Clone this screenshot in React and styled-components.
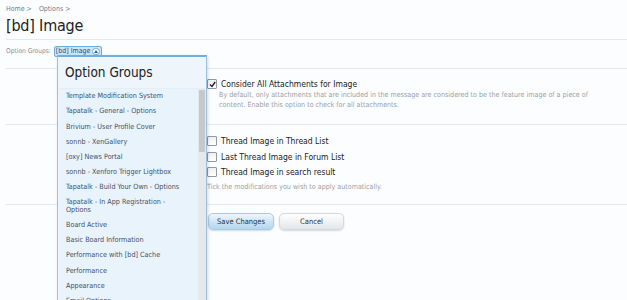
import React from "react";
import styled, { createGlobalStyle } from "styled-components";

const Global = createGlobalStyle`
  html, body { margin: 0; padding: 0; background: #fcfdfe; }
  body { font-family: "DejaVu Sans Condensed", "Liberation Sans", sans-serif; }
`;

const Page = styled.div`
  position: relative;
  width: 627px;
  height: 300px;
  overflow: hidden;
  padding: 0 0 0 6px;
  box-sizing: border-box;
  font-family: "DejaVu Sans Condensed", "Liberation Sans", Arial, sans-serif;
`;

const Crumbs = styled.div`
  display: flex;
  gap: 7px;
  padding-top: 4px;
  height: 10px;
  font-size: 7px;
  line-height: 10px;
  color: #6d7f95;
`;

const Title = styled.h1`
  margin: 0;
  font-weight: normal;
  font-size: 16px;
  line-height: 24px;
  height: 25px;
  color: #222;
  letter-spacing: -0.2px;
`;

const Rule = styled.div`
  height: 1px;
  background: #dcebf5;
`;

const GroupsBar = styled.div`
  display: flex;
  align-items: center;
  height: 28px;
  font-size: 6.6px;
  color: #8a8f96;
  gap: 3px;
`;

const GroupLabel = styled.span`
  margin-top: -6px;
`;

const GroupChip = styled.span`
  display: inline-flex;
  align-items: center;
  gap: 2px;
  height: 9px;
  padding: 0 1px;
  border: 1px solid #6aaede;
  border-radius: 2px;
  background: #cfe5f6;
  color: #1e4f7a;
  font-size: 7px;
  margin-top: -6px;
`;

const ChipArrow = styled.span`
  display: inline-flex;
  align-items: center;
  justify-content: center;
  width: 8px;
  height: 7px;
  border-radius: 4px;
  background: #ffffff;
  border: 1px solid #6aaede;
  box-sizing: border-box;
`;

const Form = styled.div`
  display: grid;
  grid-template-columns: 201px 1fr;
`;

const Section = styled.div`
  grid-column: 2;
  padding: ${(p) => p.$pad};
`;

const FullRule = styled(Rule)`
  grid-column: 1 / span 2;
`;

const CheckRow = styled.label`
  display: flex;
  align-items: center;
  gap: 4px;
  height: ${(p) => p.$h || 16}px;
  font-size: 8.5px;
  color: #222;
`;

const Box = styled.span`
  width: 8px;
  height: 8px;
  border: 1px solid #8f9aa5;
  border-radius: 1px;
  background: linear-gradient(#f0f0f0, #fff);
  display: inline-flex;
  align-items: center;
  justify-content: center;
  flex: none;
`;

const Desc = styled.div`
  font-size: 7.1px;
  line-height: 9.5px;
  color: #9a9ea3;
  padding-left: 12px;
  width: 395px;
`;

const Hint = styled.div`
  font-size: 7.1px;
  color: #9a9ea3;
  line-height: 13px;
`;

const Buttons = styled.div`
  display: flex;
  gap: 5px;
  padding: 8px 0 0 1px;
`;

const Button = styled.button`
  width: ${(p) => p.$w}px;
  height: 17px;
  border-radius: 5px;
  border: 1px solid ${(p) => (p.$primary ? "#a9cbe4" : "#d5d9de")};
  background: ${(p) =>
    p.$primary
      ? "linear-gradient(#eef6fc, #c9e2f4 60%, #b5d6ee)"
      : "linear-gradient(#ffffff, #eef0f3 60%, #e3e6ea)"};
  box-shadow: 0 1px 2px rgba(0, 0, 0, 0.15);
  font-family: "DejaVu Sans Condensed", "Liberation Sans", Arial, sans-serif;
  font-size: 7.5px;
  color: #2a3540;
  padding: 0;
`;

const Popup = styled.div`
  position: absolute;
  left: 57px;
  top: 55px;
  width: 150px;
  height: 260px;
  box-sizing: border-box;
  background: #eef5fb;
  border: 1px solid #9fbfd9;
  border-top: 2px solid #6cb0e0;
  box-shadow: 1px 1px 3px rgba(0, 0, 0, 0.15);
  display: flex;
  flex-direction: column;
`;

const PopupTitle = styled.div`
  font-size: 13.5px;
  color: #222;
  padding: 7px 0 0 7px;
  height: 24px;
`;

const ListWrap = styled.div`
  display: flex;
  flex: 1;
  border-top: 1px solid #e3eef8;
  background: #e9f3fb;
  margin-left: 1px;
`;

const List = styled.div`
  flex: 1;
  padding: 0 0 0 7px;
`;

const Item = styled.div`
  font-size: 7.2px;
  line-height: 8.3px;
  padding: 3.4px 0;
  color: #3f5268;
  width: 122px;
`;

const Track = styled.div`
  width: 8px;
  background: #e6e9ec;
  padding: 1px 1px 0 1px;
  box-sizing: border-box;
`;

const Thumb = styled.div`
  height: 62px;
  background: #c6c9cc;
  border-radius: 1px;
`;

const items = [
  "Template Modification System",
  "Tapatalk - General - Options",
  "Brivium - User Profile Cover",
  "sonnb - XenGallery",
  "[oxy] News Portal",
  "sonnb - Xenforo Trigger Lightbox",
  "Tapatalk - Build Your Own - Options",
  "Tapatalk - In App Registration - Options",
  "Board Active",
  "Basic Board Information",
  "Performance with [bd] Cache",
  "Performance",
  "Appearance",
  "Email Options",
];

const Check = () => (
  <svg width="7" height="7" viewBox="0 0 7 7">
    <path d="M1 3.5 L3 5.5 L6.2 1" stroke="#222" strokeWidth="1.4" fill="none" />
  </svg>
);

export default function App() {
  return (
    <>
      <Global />
      <Page>
        <Crumbs>
          <span>Home &gt;</span>
          <span>Options &gt;</span>
        </Crumbs>
        <Title>[bd] Image</Title>
        <Rule />
        <GroupsBar>
          <GroupLabel>Option Groups:</GroupLabel>
          <GroupChip>
            [bd] Image
            <ChipArrow>
              <svg width="4" height="3" viewBox="0 0 4 3">
                <path d="M0 3 L2 0 L4 3 Z" fill="#2b6aa3" />
              </svg>
            </ChipArrow>
          </GroupChip>
        </GroupsBar>
        <Form>
          <FullRule />
          <Section $pad="9px 0 0 0">
            <CheckRow $h={12}>
              <Box>
                <Check />
              </Box>
              Consider All Attachments for Image
            </CheckRow>
            <Desc>
              By default, only attachments that are included in the message are considered to be the
              feature image of a piece of content. Enable this option to check for all attachments.
            </Desc>
          </Section>
          <Section $pad="0 0 15px 0" />
          <FullRule />
          <Section $pad="8px 0 11px 0">
            <CheckRow $h={15.7}>
              <Box />
              Thread Image in Thread List
            </CheckRow>
            <CheckRow $h={15.7}>
              <Box />
              Last Thread Image in Forum List
            </CheckRow>
            <CheckRow $h={15.7}>
              <Box />
              Thread Image in search result
            </CheckRow>
            <Hint>Tick the modifications you wish to apply automatically.</Hint>
          </Section>
          <FullRule />
          <Section $pad="0">
            <Buttons>
              <Button $primary $w={66}>Save Changes</Button>
              <Button $w={65}>Cancel</Button>
            </Buttons>
          </Section>
        </Form>
        <Popup>
          <PopupTitle>Option Groups</PopupTitle>
          <ListWrap>
            <List>
              {items.map((t) => (
                <Item key={t}>{t}</Item>
              ))}
            </List>
            <Track>
              <Thumb />
            </Track>
          </ListWrap>
        </Popup>
      </Page>
    </>
  );
}
